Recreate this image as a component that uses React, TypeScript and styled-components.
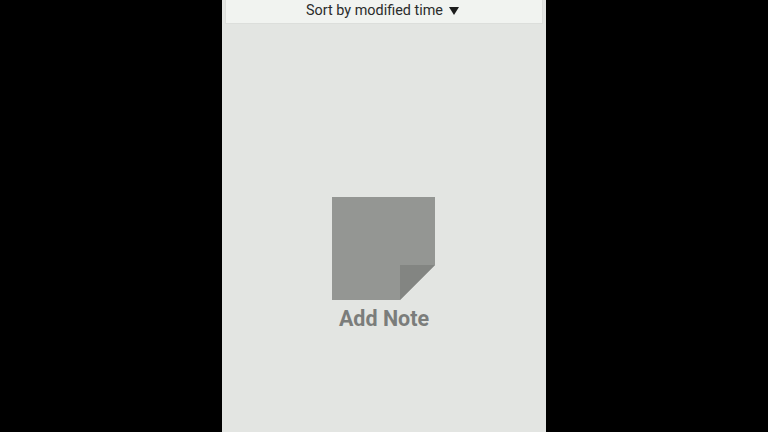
import React from 'react'
import styled, { createGlobalStyle } from 'styled-components'

const GlobalStyle = createGlobalStyle`
  html, body {
    margin: 0;
    padding: 0;
    height: 100%;
    background: #000;
    overflow: hidden;
  }
  #root {
    height: 100%;
  }
`

const App: React.FC = () => {
  return (
    <Page>
      <GlobalStyle />
      <Phone>
        <SortBar>
          <SortLabel>Sort by modified time</SortLabel>
          <Caret />
        </SortBar>
        <EmptyState>
          <NoteIcon viewBox="0 0 103 103">
            <path d="M0 0H103V68L68 103H0Z" fill="#949693" />
            <path d="M68 68H103L68 103Z" fill="#838582" />
          </NoteIcon>
          <AddNote>Add Note</AddNote>
        </EmptyState>
      </Phone>
    </Page>
  )
}

export default App

const Page = styled.div`
  height: 100%;
  display: flex;
  justify-content: center;
  font-family: Roboto, "Liberation Sans", sans-serif;
`

const Phone = styled.div`
  width: 324px;
  height: 432px;
  background: #e3e5e2;
  display: flex;
  flex-direction: column;
  align-items: center;
`

const SortBar = styled.div`
  box-sizing: border-box;
  width: 318px;
  height: 24px;
  flex-shrink: 0;
  padding: 0 3px 2px 0;
  background: #f1f3f0;
  border-bottom: 1px solid #dcdedb;
  border-left: 1px solid #dcdedb;
  border-right: 1px solid #dcdedb;
  display: flex;
  align-items: center;
  justify-content: center;
  gap: 6px;
`

const SortLabel = styled.span`
  font-size: 14.4px;
  color: #2b2c2b;
  line-height: 20px;
`

const Caret = styled.span`
  width: 0;
  height: 0;
  border-left: 5px solid transparent;
  border-right: 5px solid transparent;
  border-top: 8px solid #1c1c1c;
`

const EmptyState = styled.div`
  display: flex;
  flex-direction: column;
  align-items: center;
  padding-top: 173px;
`

const NoteIcon = styled.svg`
  width: 103px;
  height: 103px;
  display: block;
  margin-right: 1px;
`

const AddNote = styled.div`
  margin-top: 4px;
  font-size: 21.5px;
  font-weight: 700;
  line-height: 30px;
  color: #7b7d7b;
`
